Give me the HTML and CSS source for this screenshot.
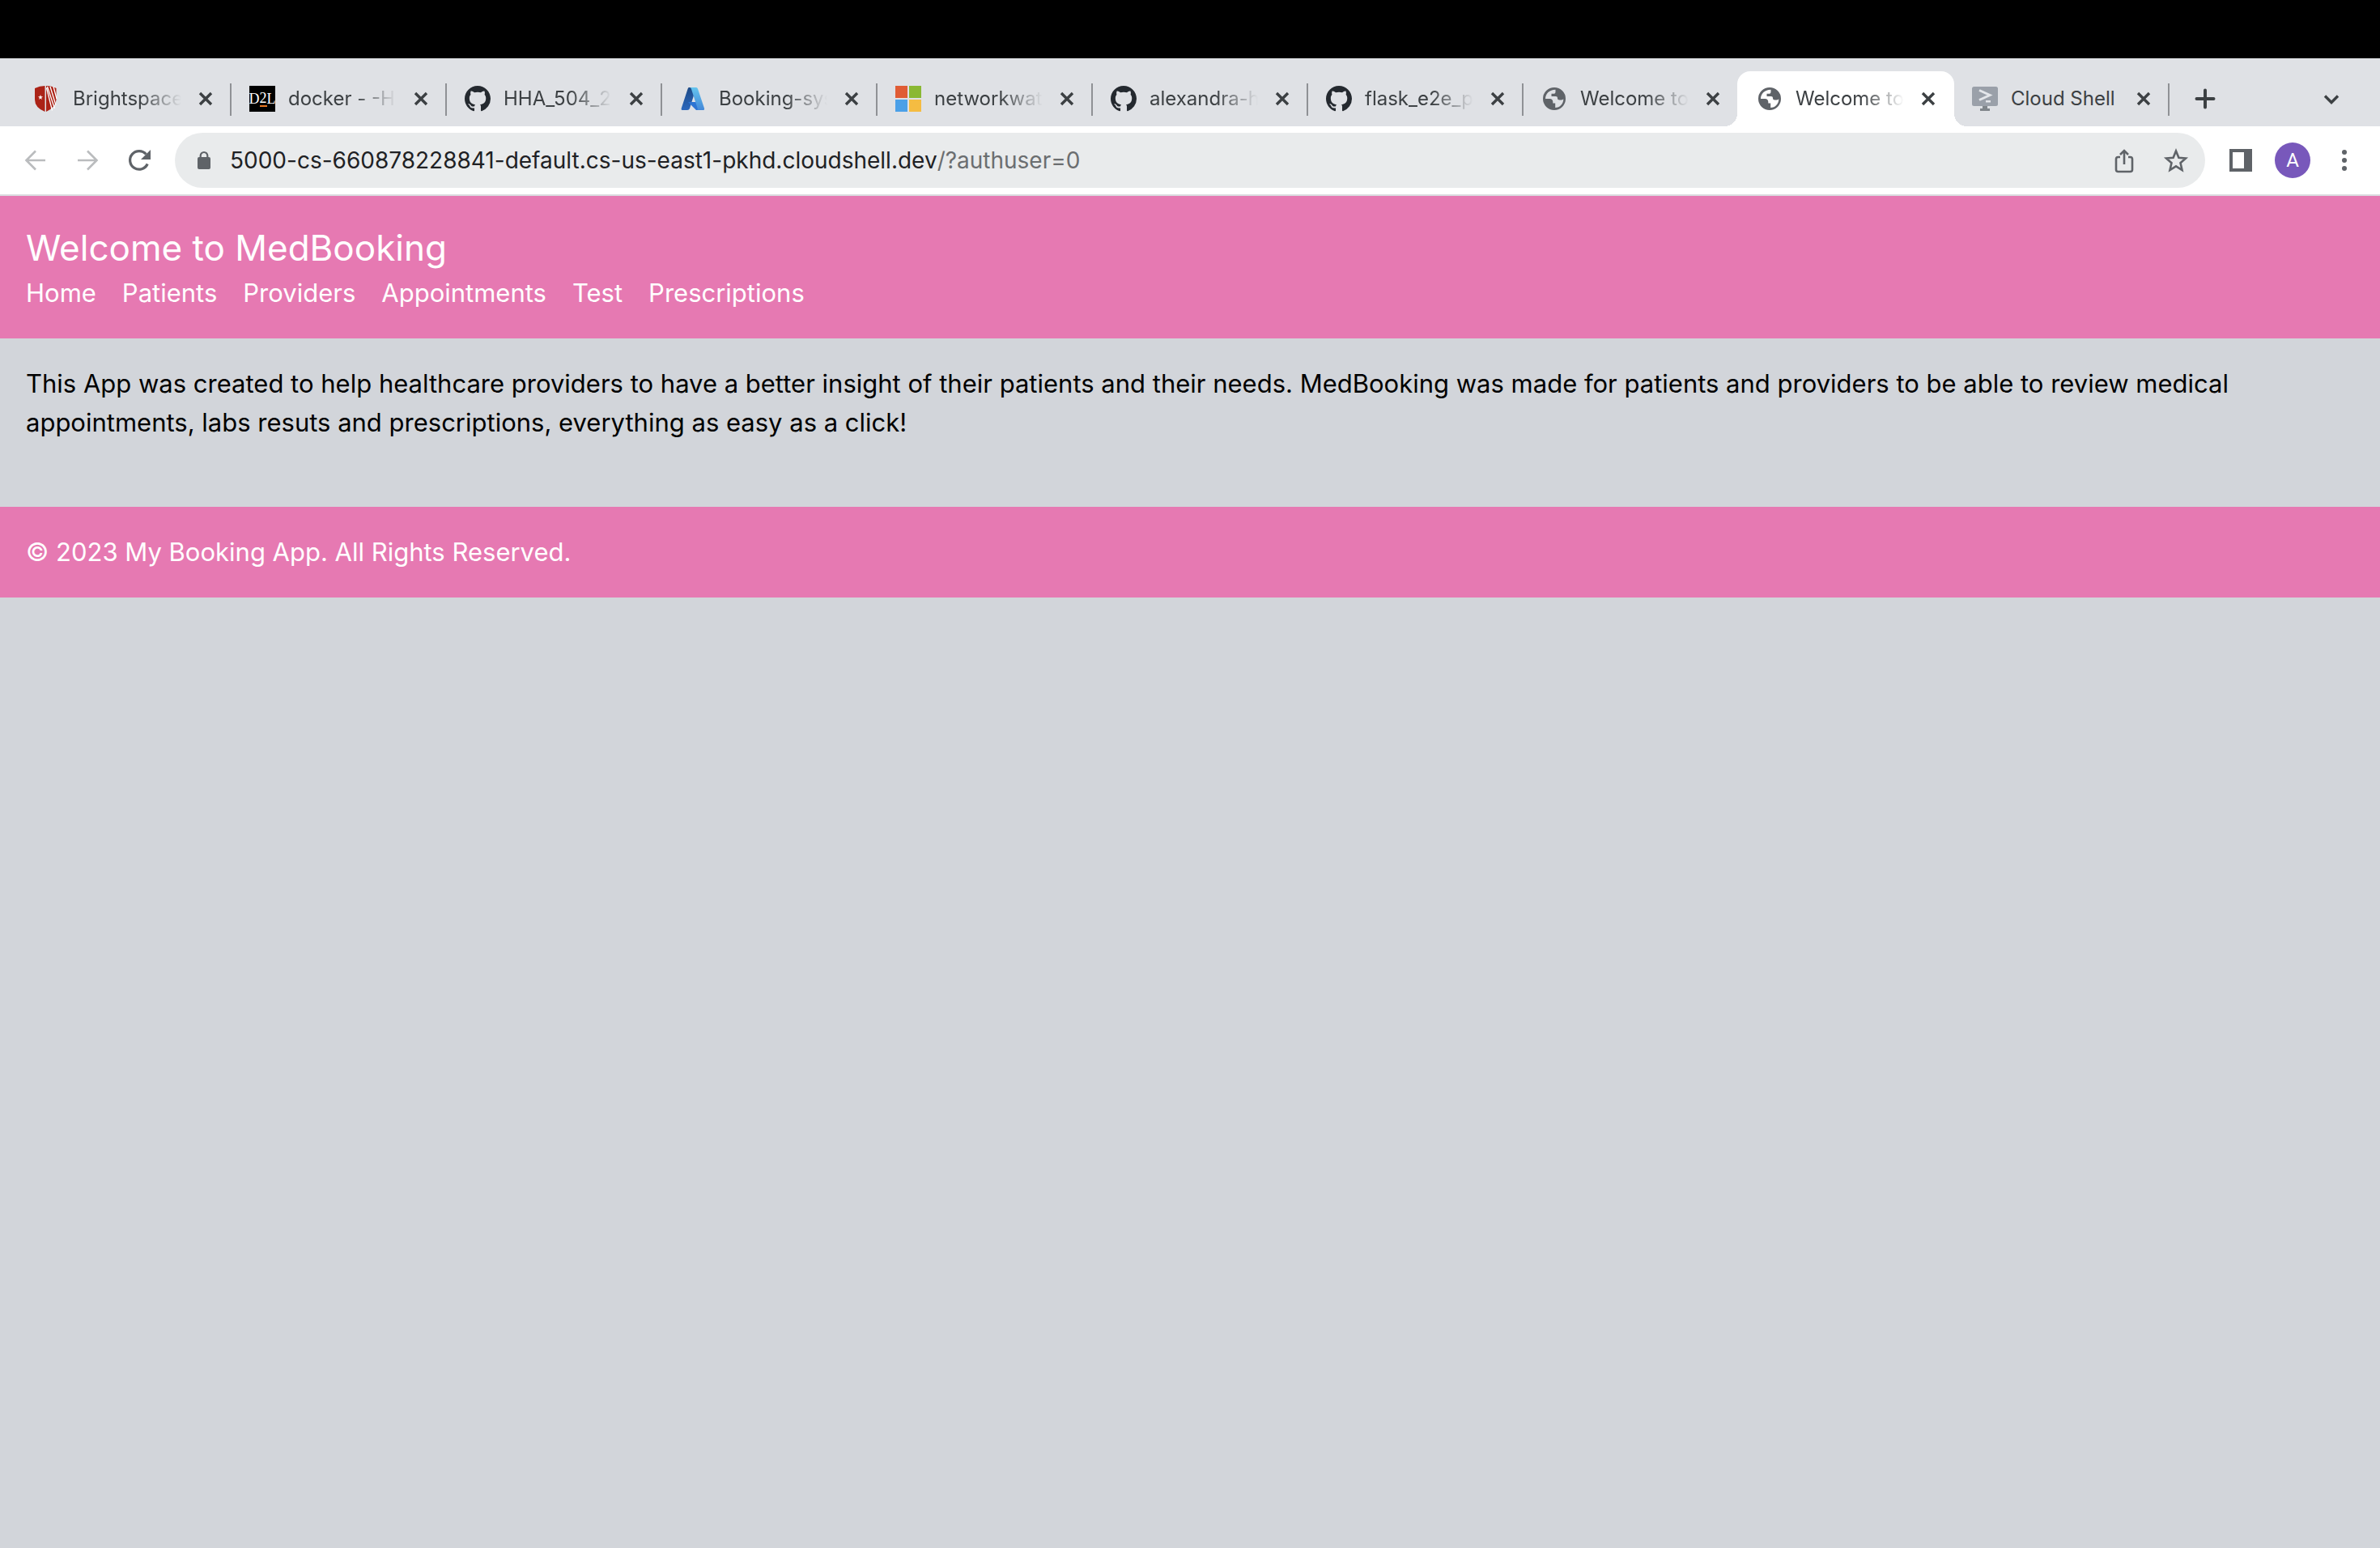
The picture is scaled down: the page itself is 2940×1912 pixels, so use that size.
FILE: index.html
```html
<!DOCTYPE html>
<html lang="en">
<head>
<meta charset="utf-8">
<title>Welcome to MedBooking</title>
<link rel="stylesheet" href="styles.css">
</head>
<body>
<svg class="sprite" aria-hidden="true">
  <symbol id="github" viewBox="0 0 16 16"><path d="M8 0C3.58 0 0 3.58 0 8c0 3.54 2.29 6.53 5.47 7.59.4.07.55-.17.55-.38 0-.19-.01-.82-.01-1.49-2.01.37-2.53-.49-2.69-.94-.09-.23-.48-.94-.82-1.13-.28-.15-.68-.52-.01-.53.63-.01 1.08.58 1.23.82.72 1.21 1.87.87 2.33.66.07-.52.28-.87.51-1.07-1.78-.2-3.64-.89-3.64-3.95 0-.87.31-1.59.82-2.15-.08-.2-.36-1.02.08-2.12 0 0 .67-.21 2.2.82.64-.18 1.32-.27 2-.27s1.36.09 2 .27c1.53-1.04 2.2-.82 2.2-.82.44 1.1.16 1.92.08 2.12.51.56.82 1.27.82 2.15 0 3.07-1.87 3.75-3.65 3.95.29.25.54.73.54 1.48 0 1.07-.01 1.93-.01 2.2 0 .21.15.46.55.38A8.01 8.01 0 0 0 16 8c0-4.42-3.58-8-8-8z" fill="#24292f"/></symbol>
  <symbol id="globe" viewBox="0 0 32 32"><path fill="#5f6368" fill-rule="evenodd" d="M16 2a14 14 0 1 1 0 28a14 14 0 1 1 0-28zM17.500 4.800C10 4.800 5 10 5 16h5.500c2.200 0 3.800 1.500 3.800 3.800V21.500h2.900v5.500C23 27 27.300 22 27.300 16.200q-1 1.300-3 1.300H22.500c-1.700 0-2.500-.8-2.500-2.200 0-1.500-.8-2.300-2.200-2.300H12.500V9.800H15c1.600 0 2.500-1 2.500-2.400z"/></symbol>
  <symbol id="close" viewBox="0 0 32 32"><path d="M9 9l14 14M23 9L9 23" stroke="#3c4043" stroke-width="3.400" fill="none"/></symbol>
</svg>

<div class="menu-bar"></div>

<div class="tab-strip">
  <div class="tab">
    <button class="tab-title"><svg class="favicon" viewBox="0 0 32 32"><path d="M1 3Q7 0 13.500 0V32Q1 27 1 17z" fill="#ab2317"/><path d="M15 0q7 0 12.500 3v14q0 9-12.500 15z" fill="#ab2317"/><path d="M15.500 2.500l7 28M16.500 1l9 27M20 1l7 23M24 1l4 15" stroke="#fff" stroke-width="1.300" fill="none"/><path d="M8 11l.8 2.200 2.200.1-1.800 1.400.6 2.200L8 15.600l-1.800 1.300.6-2.200L5 13.300l2.200-.1z" fill="#fff"/></svg><span class="label">Brightspace</span></button>
    <button class="close" aria-label="Close tab"><svg><use href="#close"/></svg></button>
  </div>
  <div class="tab">
    <button class="tab-title"><span class="favicon d2l" aria-hidden="true">D<span class="two">2</span>L</span><span class="label">docker - -H</span></button>
    <button class="close" aria-label="Close tab"><svg><use href="#close"/></svg></button>
  </div>
  <div class="tab">
    <button class="tab-title"><svg class="favicon"><use href="#github"/></svg><span class="label">HHA_504_2</span></button>
    <button class="close" aria-label="Close tab"><svg><use href="#close"/></svg></button>
  </div>
  <div class="tab">
    <button class="tab-title"><svg class="favicon" viewBox="0 0 32 32"><defs><linearGradient id="az1" x1="0" y1="0" x2="0" y2="1"><stop offset="0" stop-color="#1d4a86"/><stop offset="1" stop-color="#2c68bd"/></linearGradient><linearGradient id="az2" x1="0" y1="0" x2="0" y2="1"><stop offset="0" stop-color="#64c4ee"/><stop offset="1" stop-color="#4488d8"/></linearGradient></defs><path d="M11 2h9L12 28q-.7 2-3 2H3.500q-2.500 0-1.700-2.600L9.500 4Q10 2 11 2z" fill="url(#az1)"/><path d="M10 20h12l3 10h-5z" fill="#2d74d3"/><path d="M12 2h8q1.500 0 2 1.700l8 24q.6 2.300-1.700 2.300H20q2.300 0 1.600-2.300L14 4Q13.500 2 12 2z" fill="url(#az2)"/></svg><span class="label">Booking-sys</span></button>
    <button class="close" aria-label="Close tab"><svg><use href="#close"/></svg></button>
  </div>
  <div class="tab">
    <button class="tab-title"><svg class="favicon" viewBox="0 0 32 32"><path d="M0 0h15v15H0z" fill="#e05c35"/><path d="M17 0h15v15H17z" fill="#8ab833"/><path d="M0 17h15v15H0z" fill="#4ba0e8"/><path d="M17 17h15v15H17z" fill="#f5bc42"/></svg><span class="label">networkwat</span></button>
    <button class="close" aria-label="Close tab"><svg><use href="#close"/></svg></button>
  </div>
  <div class="tab">
    <button class="tab-title"><svg class="favicon"><use href="#github"/></svg><span class="label">alexandra-h</span></button>
    <button class="close" aria-label="Close tab"><svg><use href="#close"/></svg></button>
  </div>
  <div class="tab">
    <button class="tab-title"><svg class="favicon"><use href="#github"/></svg><span class="label">flask_e2e_p</span></button>
    <button class="close" aria-label="Close tab"><svg><use href="#close"/></svg></button>
  </div>
  <div class="tab before-active">
    <button class="tab-title"><svg class="favicon"><use href="#globe"/></svg><span class="label">Welcome to</span></button>
    <button class="close" aria-label="Close tab"><svg><use href="#close"/></svg></button>
  </div>
  <div class="tab active">
    <button class="tab-title"><svg class="favicon"><use href="#globe"/></svg><span class="label">Welcome to</span></button>
    <button class="close" aria-label="Close tab"><svg><use href="#close"/></svg></button>
  </div>
  <div class="tab">
    <button class="tab-title"><svg class="favicon" viewBox="0 0 32 32"><rect y="1" width="32" height="24" rx="2.500" fill="#9aa0a9"/><path d="M13 25h6v3h3v3H10v-3h3z" fill="#80868b"/><path d="M9 5.500l13 6-13 6" stroke="#e4e6ea" stroke-width="3" fill="none"/><path d="M17 18h6v2.500h-6z" fill="#e4e6ea"/></svg><span class="label full">Cloud Shell</span></button>
    <button class="close" aria-label="Close tab"><svg><use href="#close"/></svg></button>
  </div>
  <button class="tool new-tab" aria-label="New tab"><svg viewBox="0 0 32 32"><path d="M16 5.500v21M5.500 16h21" stroke="#3c4043" stroke-width="4" stroke-linecap="round"/></svg></button>
  <button class="tool tab-search" aria-label="Search tabs"><svg viewBox="0 0 32 32"><path d="M8 12.500l8 8 8-8" stroke="#3c4043" stroke-width="3.400" fill="none"/></svg></button>
</div>

<div class="toolbar">
  <button class="tool" aria-label="Back"><svg viewBox="0 0 32 32"><path d="M28 16H5M16 4.500L4.500 16 16 27.500" stroke="#babcbe" stroke-width="2.600" fill="none"/></svg></button>
  <button class="tool" aria-label="Forward"><svg viewBox="0 0 32 32"><path d="M4 16h23M16 4.500L27.500 16 16 27.500" stroke="#babcbe" stroke-width="2.600" fill="none"/></svg></button>
  <button class="tool" aria-label="Reload"><svg viewBox="0 0 32 32"><path d="M26.200 20.500A11.300 11.300 0 1 1 24.500 8.500" stroke="#5f6368" stroke-width="3.200" fill="none"/><path d="M30 3v12H18z" fill="#5f6368"/></svg></button>
  <div class="omnibox">
    <svg class="lock" viewBox="0 0 32 32"><rect x="8" y="12" width="16" height="15" rx="2" fill="#5f6368"/><path d="M11.700 13V10.300a4.300 4.300 0 0 1 8.600 0V13" stroke="#5f6368" stroke-width="2.200" fill="none"/></svg>
    <input class="host" type="text" aria-label="Address" value="5000-cs-660878228841-default.cs-us-east1-pkhd.cloudshell.dev"><span class="query">/?authuser=0</span>
    <button class="tool share" aria-label="Share"><svg viewBox="0 0 32 32"><path d="M11 12H8.500Q6 12 6 14.500v13Q6 30 8.500 30h15q2.500 0 2.500-2.500v-13Q26 12 23.500 12H21M16 21V4.500M11 9l5-5 5 5" stroke="#5f6368" stroke-width="2.600" fill="none"/></svg></button>
    <button class="tool" aria-label="Bookmark this tab"><svg viewBox="0 0 32 32"><path d="M16 4.500l3.400 8.200 8.600.8-6.500 5.800 2 8.700-7.500-4.600L8.500 28l2-8.700L4 13.500l8.600-.8z" stroke="#5f6368" stroke-width="2.600" fill="none"/></svg></button>
  </div>
  <button class="tool" aria-label="Side panel"><svg viewBox="0 0 32 32"><path d="M2 2h28v28H2zM6 6v20h14V6z" fill="#5f6368" fill-rule="evenodd"/></svg></button>
  <button class="tool" aria-label="Profile"><span class="avatar">A</span></button>
  <button class="tool" aria-label="Menu"><svg viewBox="0 0 32 32"><g fill="#5f6368"><circle cx="16" cy="6" r="3"/><circle cx="16" cy="16" r="3"/><circle cx="16" cy="26" r="3"/></g></svg></button>
</div>

<header class="site-header">
  <h1>Welcome to MedBooking</h1>
  <nav>
    <a href="#">Home</a>
    <a href="#">Patients</a>
    <a href="#">Providers</a>
    <a href="#">Appointments</a>
    <a href="#">Test</a>
    <a href="#">Prescriptions</a>
  </nav>
</header>
<main>
  <p>This App was created to help healthcare providers to have a better insight of their patients and their needs. MedBooking was made for patients and providers to be able to review medical appointments, labs resuts and prescriptions, everything as easy as a click!</p>
</main>
<footer class="site-footer">© 2023 My Booking App. All Rights Reserved.</footer>
</body>
</html>
```
FILE: styles.css
```css
* { box-sizing: border-box; }

body {
  margin: 0;
  min-height: 100vh;
  background: #d2d5da;
  color: #000;
  font: 31px/48px Inter, "Liberation Sans", sans-serif;
}

button, input {
  margin: 0;
  padding: 0;
  border: 0;
  background: none;
  font: inherit;
  color: inherit;
}

.sprite { display: none; }

/* Browser chrome */
.menu-bar { height: 72px; background: #000; }

.tab-strip {
  display: flex;
  align-items: stretch;
  height: 84px;
  padding: 16px 32px 0 20px;
  background: #dfe1e5;
  color: #3c4043;
}

.tab {
  position: relative;
  display: flex;
  align-items: center;
  flex: 0 1 266px;
  min-width: 0;
  padding: 0 16px 0 22px;
}

.tab::after {
  content: "";
  position: absolute;
  right: 0;
  top: 15px;
  width: 2px;
  height: 40px;
  background: #8f9195;
}

.tab.before-active::after { display: none; }

.tab.active {
  flex-basis: 268px;
  margin-left: -2px;
  padding-left: 24px;
  border-radius: 16px 16px 0 0;
  background: #fff;
}

/* Curved feet where the active tab meets the toolbar */
.tab.active::before,
.tab.active::after {
  content: "";
  position: absolute;
  top: auto;
  bottom: 0;
  width: 16px;
  height: 16px;
}

.tab.active::before {
  left: -16px;
  background: radial-gradient(circle at 0 0, transparent 16px, #fff 16px);
}

.tab.active::after {
  right: -16px;
  background: radial-gradient(circle at 100% 0, transparent 16px, #fff 16px);
}

.tab-title {
  display: flex;
  align-items: center;
  flex: 1;
  gap: 16px;
  min-width: 0;
  height: 40px;
  text-align: left;
}

.favicon { flex: none; width: 32px; height: 32px; }

.d2l {
  display: flex;
  justify-content: center;
  overflow: hidden;
  background: #000;
  color: #fff;
  font: 18px/32px "Liberation Serif", serif;
}

.two { align-self: center; line-height: 18px; border-bottom: 2px solid #e87722; }

.label {
  flex: 1;
  overflow: hidden;
  white-space: nowrap;
  font-size: 24px;
  line-height: 32px;
  mask-image: linear-gradient(to right, #000 calc(100% - 52px), transparent);
}

.label.full { mask-image: none; }

.close {
  flex: none;
  width: 32px;
  height: 32px;
  margin-left: 14px;
}

.close svg { display: block; width: 32px; height: 32px; }

.tool {
  display: flex;
  align-items: center;
  justify-content: center;
  flex: none;
  width: 56px;
  height: 56px;
}

.tool svg { width: 32px; height: 32px; }

.new-tab { margin: 6px 0 0 16px; }
.tab-search { margin: 6px 0 0 auto; }

.toolbar {
  display: flex;
  align-items: center;
  gap: 8px;
  height: 86px;
  padding: 0 16px;
  border-bottom: 2px solid #dadce0;
  background: #fff;
}

.omnibox {
  display: flex;
  align-items: center;
  flex: 1;
  height: 68px;
  margin: 0 8px;
  padding: 0 8px 0 20px;
  border-radius: 34px;
  background: #e9ebec;
  color: #202124;
  font-size: 28px;
  line-height: 40px;
}

.lock { flex: none; width: 32px; height: 32px; margin-right: 16px; }
.host { field-sizing: content; height: 40px; }
.query { color: #6b6e70; }
.share { margin: 0 8px 0 auto; }

.avatar {
  width: 44px;
  height: 44px;
  border-radius: 50%;
  background: #7858bb;
  color: #fff;
  font: 24px/44px Roboto, sans-serif;
  text-align: center;
}

/* Page */
.site-header, .site-footer {
  padding: 32px;
  background: #e679b2;
  color: #fff;
}

h1 { margin: 0; font-size: 44px; font-weight: 400; line-height: 64px; }

nav { display: flex; gap: 32px; }
nav a { color: inherit; text-decoration: none; }

main { padding: 32px 32px 80px; }
main p { margin: 0; }
```
